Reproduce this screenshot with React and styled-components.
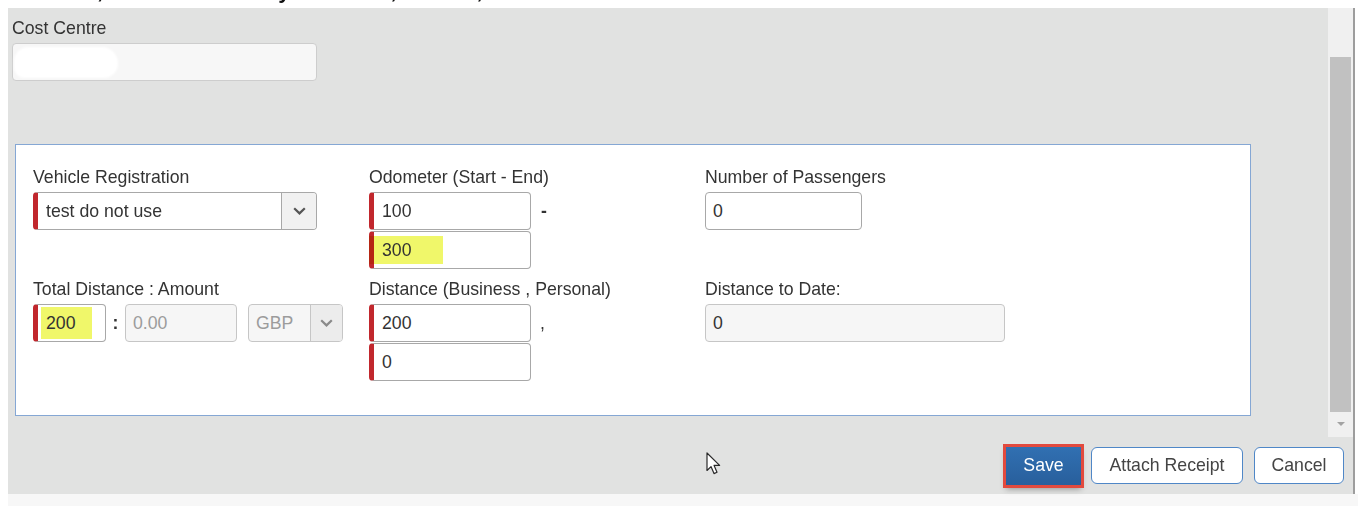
import React from "react";
import styled, { createGlobalStyle } from "styled-components";

const GlobalStyle = createGlobalStyle`
  html, body {
    margin: 0;
    padding: 0;
    background: #fff;
  }

  body {
    font-family: "Liberation Sans", Arial, sans-serif;
    font-size: 17.7px;
    color: #333;
  }
`;

const TopStrip = styled.div`
  height: 8px;
  overflow: hidden;
  display: flex;
  align-items: flex-start;
  font-size: 22px;
  font-weight: 700;
  line-height: 24px;
  color: #111;
`;

const Glyph = styled.span`
  display: block;
  margin-top: -21px;
  margin-left: ${(p) => p.$gap}px;
`;

const Frame = styled.div`
  margin-left: 8px;
  width: 1345px;
  border-right: 2px solid #9d9d9d;
  background: #e1e2e1;
  display: flex;
  flex-direction: column;
`;

const ScrollArea = styled.div`
  display: flex;
  height: 429px;
`;

const Body = styled.div`
  flex: 1;
  padding: 11px 0 0 4px;
`;

const Label = styled.div`
  line-height: 18px;
  margin-bottom: 6px;
  color: #333;
  white-space: nowrap;
`;

const Field = styled.div`
  box-sizing: border-box;
  position: relative;
  height: 38px;
  width: ${(p) => p.$w}px;
  display: flex;
  align-items: center;
  background: ${(p) => (p.$disabled ? "#f6f6f6" : "#fff")};
  color: ${(p) => (p.$disabled ? "#9c9c9c" : "#333")};
  border: 1px solid ${(p) => (p.$disabled ? "#c6c6c6" : "#a8a8a8")};
  border-left: ${(p) => (p.$required ? "5px solid #c1272d" : undefined)};
  border-radius: 4px;
  padding-left: ${(p) => (p.$required ? 8 : 7)}px;
  white-space: nowrap;
`;

const CostField = styled(Field)`
  background: #f7f7f7;
  border-color: #cdcdcd;
  padding-left: 0;
`;

const Smudge = styled.span`
  width: 104px;
  height: 31px;
  margin-left: 1px;
  border-radius: 16px 18px 16px 12px;
  background: #fff;
  filter: blur(1px);
`;

const Value = styled.span`
  flex: 1;
`;

const Caret = styled.span`
  box-sizing: border-box;
  align-self: stretch;
  width: ${(p) => p.$w}px;
  display: flex;
  align-items: center;
  justify-content: center;
  background: ${(p) => (p.$disabled ? "#ececec" : "#f1f1f1")};
  border-left: 1px solid ${(p) => (p.$disabled ? "#c6c6c6" : "#a8a8a8")};
  border-radius: 0 3px 3px 0;
`;

const Mark = styled.span`
  display: inline-flex;
  align-items: center;
  height: ${(p) => p.$h}px;
  margin-left: -${(p) => p.$pl}px;
  padding: 0 ${(p) => p.$pr}px 0 ${(p) => p.$pl}px;
  background: #f0f76a;
  mix-blend-mode: multiply;
`;

const Panel = styled.div`
  box-sizing: border-box;
  width: 1236px;
  margin: 63px 0 0 3px;
  background: #fff;
  border: 1px solid #85a7d4;
  padding: 23px 0 34px 17px;
  display: grid;
  grid-template-columns: 336px 336px 1fr;
  row-gap: 11px;
  align-items: start;
`;

const InlineRow = styled.div`
  display: flex;
  align-items: center;
`;

const Pair = styled.div`
  display: grid;
  grid-template-columns: 162px auto;
  row-gap: 1px;
`;

const Sep = styled.span`
  display: flex;
  align-items: center;
  height: 38px;
  width: ${(p) => p.$w || "auto"}px;
  padding-left: ${(p) => p.$pl || 0}px;
  justify-content: ${(p) => (p.$center ? "center" : "flex-start")};
  font-weight: ${(p) => (p.$bold ? 700 : 400)};
  color: #333;
`;

const Scrollbar = styled.div`
  width: 25px;
  background: #f0f0f0;
  display: flex;
  flex-direction: column;
  align-items: center;
`;

const Thumb = styled.div`
  width: 21px;
  height: 355px;
  margin-top: 49px;
  background: #c1c1c1;
`;

const DownArrow = styled.div`
  margin-top: 10px;
  width: 0;
  height: 0;
  border-left: 4px solid transparent;
  border-right: 4px solid transparent;
  border-top: 4px solid #a3a3a3;
`;

const Footer = styled.div`
  position: relative;
  height: 57px;
  display: flex;
  align-items: center;
  justify-content: flex-end;
  gap: 10px;
  padding-right: 9px;
`;

const Button = styled.button`
  box-sizing: border-box;
  height: 37px;
  width: ${(p) => p.$w}px;
  margin-left: ${(p) => p.$ml || 0}px;
  font-family: "Liberation Sans", Arial, sans-serif;
  font-size: 17.7px;
  border-radius: 6px;
  border: 1px solid #4f87c7;
  background: #fff;
  color: #444;
  padding: 0;
  cursor: pointer;
`;

const PrimaryButton = styled(Button)`
  height: 38px;
  border-radius: 0;
  border: none;
  color: #fff;
  background: linear-gradient(#3170b2, #285f9c);
  outline: 3px solid #e24a3e;
  box-shadow: 0 4px 6px rgba(0, 0, 0, 0.35);
`;

const Cursor = styled.svg`
  position: absolute;
  left: 698px;
  top: 15px;
`;

const BottomStrip = styled.div`
  height: 12px;
  width: 1350px;
  margin-left: 8px;
  background: #f7f7f7;
`;

const Chevron = ({ color = "#555" }) => (
  <svg width="13" height="8" viewBox="0 0 13 8">
    <path d="M1.2 1.2 L6.5 6.4 L11.8 1.2" fill="none" stroke={color} strokeWidth="2.2" />
  </svg>
);

export default function App() {
  return (
    <>
      <GlobalStyle />
      <TopStrip>
        <Glyph $gap={97}>,</Glyph>
        <Glyph $gap={175}>y</Glyph>
        <Glyph $gap={100}>,</Glyph>
        <Glyph $gap={80}>,</Glyph>
      </TopStrip>
      <Frame>
        <ScrollArea>
          <Body>
            <Label>Cost Centre</Label>
            <CostField $w={305}>
              <Smudge />
            </CostField>

            <Panel>
              <div>
                <Label>Vehicle Registration</Label>
                <Field $w={284} $required style={{ paddingRight: 0 }}>
                  <Value>test do not use</Value>
                  <Caret $w={35}>
                    <Chevron />
                  </Caret>
                </Field>
              </div>
              <div>
                <Label>Odometer (Start - End)</Label>
                <Pair>
                  <Field $w={162} $required>100</Field>
                  <Sep $pl={10} $bold>-</Sep>
                  <Field $w={162} $required>
                    <Mark $h={28} $pl={13} $pr={31}>300</Mark>
                  </Field>
                </Pair>
              </div>
              <div>
                <Label>Number of Passengers</Label>
                <Field $w={157}>0</Field>
              </div>

              <div>
                <Label>Total Distance : Amount</Label>
                <InlineRow>
                  <Field $w={73} $required>
                    <Mark $h={32} $pl={5} $pr={16}>200</Mark>
                  </Field>
                  <Sep $w={19} $center $bold>:</Sep>
                  <Field $w={112} $disabled>0.00</Field>
                  <Field $w={95} $disabled style={{ marginLeft: 11, paddingRight: 0 }}>
                    <Value>GBP</Value>
                    <Caret $w={32} $disabled>
                      <Chevron color="#8a8a8a" />
                    </Caret>
                  </Field>
                </InlineRow>
              </div>
              <div>
                <Label>Distance (Business , Personal)</Label>
                <Pair>
                  <Field $w={162} $required>200</Field>
                  <Sep $pl={9}>,</Sep>
                  <Field $w={162} $required>0</Field>
                </Pair>
              </div>
              <div>
                <Label>Distance to Date:</Label>
                <Field $w={300} $disabled style={{ color: "#333" }}>0</Field>
              </div>
            </Panel>
          </Body>
          <Scrollbar>
            <Thumb />
            <DownArrow />
          </Scrollbar>
        </ScrollArea>

        <Footer>
          <Cursor width="15" height="23" viewBox="0 0 15 23">
            <path
              d="M1 1 L1 18.5 L5 14.6 L8 21.6 L11 20.3 L8.1 13.4 L13.6 13.4 Z"
              fill="#fff"
              stroke="#2a2a2a"
              strokeWidth="1.2"
              strokeLinejoin="round"
            />
          </Cursor>
          <PrimaryButton $w={75}>Save</PrimaryButton>
          <Button $w={152}>Attach Receipt</Button>
          <Button $w={90} $ml={1}>Cancel</Button>
        </Footer>
      </Frame>
      <BottomStrip />
    </>
  );
}
